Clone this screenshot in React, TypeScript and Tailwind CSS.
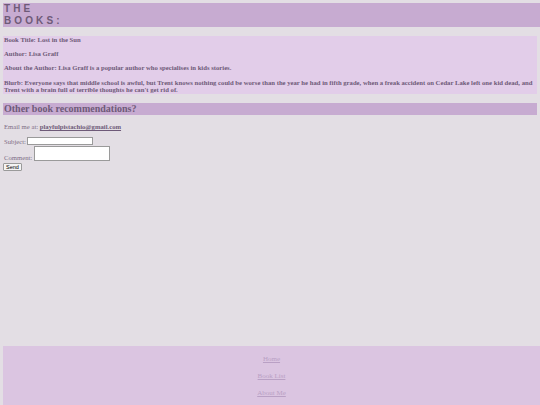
export default function App() {
  return (
    <div className="h-[405px] overflow-hidden bg-[#e3dee4] pt-[3px] font-['Liberation_Serif',serif] text-[6.68px] leading-[7.7px] text-[#6e5a78]">
      <header className="ml-[3px] h-[24px] bg-[#c7abd1] px-[1px]">
        <h1 className="-mt-[0.5px] font-['Liberation_Sans',sans-serif] text-[10px] font-bold leading-[12.5px] tracking-[3.1px] text-[#6e5a78]">
          <span className="block">THE</span>
          <span className="block">BOOKS:</span>
        </h1>
      </header>

      <section className="ml-[3px] mr-[3px] mt-[9px] bg-[#e2cde9] px-[1px] font-bold">
        <p>Book Title: Lost in the Sun</p>
        <p className="mt-[6.7px]">Author: Lisa Graff</p>
        <p className="mt-[6.7px]">About the Author: Lisa Graff is a popular author who specialises in kids stories.</p>
        <p className="mt-[6.7px]">
          Blurb: Everyone says that middle school is awful, but Trent knows nothing could be worse than the year he had in fifth grade, when a freak accident on Cedar Lake left one kid dead, and Trent with a brain full of terrible thoughts he can't get rid of.
        </p>
      </section>

      <h2 className="ml-[3px] mr-[3px] mt-[9px] bg-[#c7abd1] px-[1px] text-[10px] font-bold leading-[11.5px]">
        Other book recommendations?
      </h2>

      <div className="px-[4px] text-[#7d6d84]">
        <p className="mt-[8.5px]">
          Email me at:{' '}
          <a href="#" className="font-bold text-[#6e5a78] underline">
            playfulpistachio@gmail.com
          </a>
        </p>
        <form className="mt-[6.7px]">
          <label className="flex items-center gap-[1px]">
            Subject:
            <input className="h-[8px] w-[66px] border border-[#9a9a9a] bg-white" />
          </label>
          <label className="mt-[1px] flex items-end gap-[1px]">
            Comment:
            <textarea className="ml-[1px] h-[15px] w-[76px] resize-none border border-[#9a9a9a] bg-white" />
          </label>
          <button
            type="button"
            className="-ml-[1px] mt-[2px] flex h-[8px] w-[19px] items-center justify-center rounded-[1px] border border-[#9a9a9a] bg-[#f4f4f4] font-['Liberation_Sans',sans-serif] text-[5.5px] leading-none text-black"
          >
            Send
          </button>
        </form>
      </div>

      <footer className="ml-[3px] mt-[175px] flex flex-col items-center gap-[9px] bg-[#dbc5e1] pb-[10px] pt-[9px] text-[7px] leading-[8px] text-[#b9a0c4]">
        <a href="#" className="underline">Home</a>
        <a href="#" className="underline">Book List</a>
        <a href="#" className="underline">About Me</a>
      </footer>
    </div>
  );
}
